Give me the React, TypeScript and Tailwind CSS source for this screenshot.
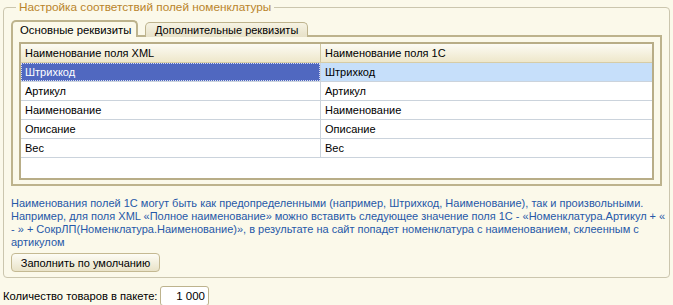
const rows = ['Штрихкод', 'Артикул', 'Наименование', 'Описание', 'Вес']

export default function App() {
  return (
    <div
      className="w-[673px] h-[305px] overflow-hidden bg-[#fbf9ea] text-[11px] leading-[14px] text-black whitespace-nowrap"
      style={{ fontFamily: '"Liberation Sans", Arial, sans-serif' }}
    >
      <fieldset className="ml-[3px] w-[667px] min-w-0 h-[278px] border border-[#cbc6ae] rounded-[4px] px-[7px] pt-[6px]">
        <legend className="ml-[5px] px-[3px] text-[11.8px] text-[#b9842a]">Настройка соответствий полей номенклатуры</legend>

        {/* tabs */}
        <div className="flex items-end h-[17px] -mb-[2px] relative z-10">
          <div className="w-[127px] h-[17px] bg-[#fbf9ea] border-2 border-b-0 border-[#bdb38d] rounded-t-[5px] pl-[7px] pt-[1px] text-[11.3px]">
            Основные реквизиты
          </div>
          <div className="ml-[7px] w-[163px] h-[15px] bg-gradient-to-b from-[#f6f3e3] to-[#e7e1c8] border border-b-0 border-[#bdb38d] rounded-t-[5px] pl-[9px] text-[11px]">
            Дополнительные реквизиты
          </div>
        </div>

        {/* tab panel */}
        <div className="border-2 border-[#bdb38d] pl-[6px] pr-[6px] pt-[5px] pb-[4px]">
          <div className="h-[138px] border-2 border-[#b8ad87] bg-white flex flex-col">
            <div className="flex h-[19px] shrink-0 bg-gradient-to-b from-[#fcfbf4] to-[#eee7ca] border-b border-[#d6cca6]">
              <div className="w-[299px] pl-[4px] flex items-center">Наименование поля XML</div>
              <div className="flex-1 border-l border-[#cfc6a0] pl-[4px] flex items-center">Наименование поля 1С</div>
            </div>
            {rows.map((r, i) => (
              <div key={r} className="flex h-[19px] shrink-0 border-b border-[#cbd3dc]">
                {i === 0 ? (
                  <div className="w-[299px] pl-[3px] flex items-center bg-[#5068c0] text-white border border-dotted border-[#d8def5]">
                    {r}
                  </div>
                ) : (
                  <div className="w-[299px] pl-[4px] flex items-center">{r}</div>
                )}
                <div
                  className={`flex-1 border-l border-[#cbd3dc] pl-[4px] flex items-center ${i === 0 ? 'bg-[#c6dffa]' : ''}`}
                >
                  {r}
                </div>
              </div>
            ))}
            <div className="flex-1" />
          </div>
        </div>

        <p className="mt-[11px] -mr-[6px] text-[#2658a8] leading-[13px]">
          <span className="block">
            Наименования полей 1С могут быть как предопределенными (например, Штрихкод, Наименование), так и произвольными.
          </span>
          <span className="block">
            Например, для поля XML «Полное наименование» можно вставить следующее значение поля 1С - «Номенклатура.Артикул + «
          </span>
          <span className="block">
            - » + СокрЛП(Номенклатура.Наименование)», в результате на сайт попадет номенклатура с наименованием, склеенным с
          </span>
          <span className="block">артикулом</span>
        </p>

        <button className="mt-[4px] w-[149px] h-[19px] rounded-[4px] border border-[#c4b992] bg-gradient-to-b from-[#fdfcf5] to-[#e9e3c8] text-black text-[11px]">
          Заполнить по умолчанию
        </button>
      </fieldset>

      <div className="flex items-center mt-[8px] h-[20px]">
        <span className="ml-[3px] w-[157px] text-[11.2px]">Количество товаров в пакете:</span>
        <input
          readOnly
          value="1 000"
          className="w-[49px] h-[20px] border border-[#bdb38d] rounded-[3px] bg-white text-right pr-[3px] text-[11.5px] outline-none"
        />
      </div>
    </div>
  )
}
